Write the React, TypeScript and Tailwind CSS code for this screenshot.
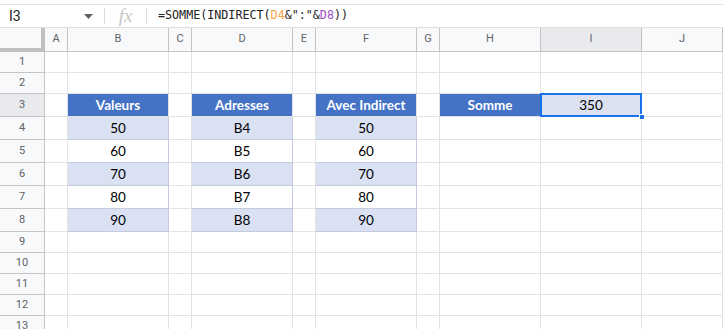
import React from 'react';

const colWidths = 'grid-cols-[45px_23px_101px_23px_101px_23px_101px_23px_101px_101px_1fr]';
const colLetters = ['A', 'B', 'C', 'D', 'E', 'F', 'G', 'H', 'I', 'J'];

// contents of rows 3..8, by column index (0 = A)
type Cell = { text?: string; kind?: 'head' | 'band' | 'plain' | 'selected' };

const tableRows: Record<number, Cell[]> = {
  3: [{}, { text: 'Valeurs', kind: 'head' }, {}, { text: 'Adresses', kind: 'head' }, {}, { text: 'Avec Indirect', kind: 'head' }, {}, { text: 'Somme', kind: 'head' }, { text: '350', kind: 'selected' }, {}],
};

const values = ['50', '60', '70', '80', '90'];
const refs = ['B4', 'B5', 'B6', 'B7', 'B8'];
values.forEach((v, i) => {
  const kind = i % 2 === 0 ? 'band' : 'plain';
  tableRows[4 + i] = [{}, { text: v, kind }, {}, { text: refs[i], kind }, {}, { text: v, kind }, {}, {}, {}, {}];
});

const rowHeight = (r: number) => (r >= 3 && r <= 8 ? 'h-[23px]' : 'h-[21px]');

function FormulaBar() {
  return (
    <div className="pt-1">
      <div className="flex h-6 items-center border-y border-[#e1e1e1] font-['Roboto',sans-serif]">
        <div className="flex w-[104px] items-center pl-[9px] pr-2 text-[14px] text-[#222]">
          <span className="flex-1">I3</span>
          <svg width="9" height="5" viewBox="0 0 9 5" className="mr-[3px]">
            <path d="M0 0 L9 0 L4.5 5 Z" fill="#5f6368" />
          </svg>
        </div>
        <div className="h-4 w-px bg-[#dadce0]" />
        <div className="flex w-[41px] justify-center font-['Liberation_Serif',serif] text-[19px] italic text-[#c4c7c5]">
          fx
        </div>
        <div className="h-4 w-px bg-[#dadce0]" />
        <div className="pl-[11px] font-['DejaVu_Sans_Mono',monospace] text-[11.7px] text-[#222]">
          =SOMME(INDIRECT(<span className="text-[#f6a54a]">D4</span>&amp;":"&amp;<span className="text-[#9a4fc7]">D8</span>))
        </div>
      </div>
    </div>
  );
}

function DataCell({ cell, rowClass }: { cell: Cell; rowClass: string }) {
  const base = `${rowClass} flex items-center justify-center border-r border-b font-['Lato',sans-serif] text-[13.5px]`;
  if (cell.kind === 'head')
    return <div className={`${base} border-[#e2e2e2] bg-[#4472c4] font-bold text-white`}>{cell.text}</div>;
  if (cell.kind === 'band')
    return <div className={`${base} border-[#c3cbdd] bg-[#d9e1f2] text-black`}>{cell.text}</div>;
  if (cell.kind === 'plain')
    return <div className={`${base} border-[#c3cbdd] bg-white text-black`}>{cell.text}</div>;
  if (cell.kind === 'selected')
    return (
      <div className={`${base} relative border-[#e2e2e2] bg-[#dbe1f1] text-black`}>
        {cell.text}
        <div className="pointer-events-none absolute -left-px -top-px bottom-[-1px] right-[-1px] border-2 border-[#1a73e8]" />
        <div className="absolute bottom-[-4px] right-[-4px] h-[6px] w-[6px] border border-white bg-[#1a73e8]" />
      </div>
    );
  return <div className={`${rowClass} border-r border-b border-[#e2e2e2] bg-white`} />;
}

export default function App() {
  const rows = Array.from({ length: 13 }, (_, i) => i + 1);
  return (
    <div className="h-[329px] w-[723px] overflow-hidden bg-white">
      <FormulaBar />
      <div className={`grid ${colWidths}`}>
        <div className="h-6 border-r-[4px] border-b-[4px] border-[#c0c0c0] bg-[#f8f9fa]" />
        {colLetters.map((c) => (
          <div
            key={c}
            className={`flex h-6 items-center justify-center border-r border-b border-[#c4c4c4] font-['Roboto',sans-serif] text-[11px] text-[#5f6368] ${c === 'I' ? 'bg-[#e8eaed]' : 'bg-[#f8f9fa]'}`}
          >
            {c}
          </div>
        ))}

        {rows.map((r) => {
          const rc = rowHeight(r);
          const cells = tableRows[r] ?? Array.from({ length: 10 }, () => ({}));
          return (
            <React.Fragment key={r}>
              <div
                className={`${rc} flex items-center justify-center border-r border-b border-[#c4c4c4] font-['Roboto',sans-serif] text-[11px] text-[#5f6368] ${r === 3 ? 'bg-[#e8eaed]' : 'bg-[#f8f9fa]'}`}
              >
                {r}
              </div>
              {cells.map((cell, i) => (
                <DataCell key={i} cell={cell} rowClass={rc} />
              ))}
            </React.Fragment>
          );
        })}
      </div>
    </div>
  );
}
